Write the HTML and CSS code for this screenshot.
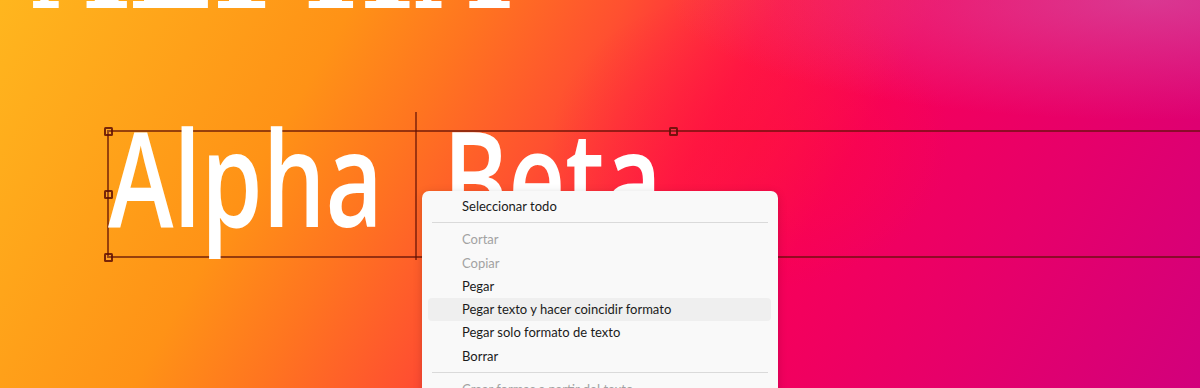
FILE: index.html
```html
<!DOCTYPE html>
<html lang="es">
<head>
<meta charset="utf-8">
<title>Alpha Beta</title>
<link rel="stylesheet" href="styles.css">
</head>
<body>
<div class="stage">
  <div class="title">ALPHA</div>

  <div class="frame">
    <span class="handle h-tl"></span>
    <span class="handle h-ml"></span>
    <span class="handle h-bl"></span>
    <span class="handle h-tm"></span>
  </div>
  <div class="divider"></div>

  <div class="word word-alpha">Alpha</div>
  <div class="word word-beta">Beta</div>

  <div class="menu">
    <div class="item">Seleccionar todo</div>
    <div class="sep"></div>
    <div class="item disabled">Cortar</div>
    <div class="item disabled">Copiar</div>
    <div class="item">Pegar</div>
    <div class="item hover">Pegar texto y hacer coincidir formato</div>
    <div class="item">Pegar solo formato de texto</div>
    <div class="item">Borrar</div>
    <div class="sep"></div>
    <div class="item disabled">Crear formas a partir del texto</div>
  </div>
</div>
</body>
</html>
```

FILE: styles.css
```css
html, body {
  margin: 0;
  padding: 0;
}

.stage {
  position: relative;
  width: 1200px;
  height: 388px;
  overflow: hidden;
  background:
    radial-gradient(ellipse 480px 120px at 1150px 0px, rgba(205, 110, 185, 0.5), rgba(205, 110, 185, 0) 100%),
    radial-gradient(ellipse 200px 150px at 750px 140px, rgba(255, 16, 56, 0.5), rgba(255, 16, 56, 0) 100%),
    linear-gradient(120deg,
      #FFB61E 0%,
      #FFA51A 12%,
      #FF9216 25%,
      #FF7420 34%,
      #FF5030 44%,
      #FF1846 55%,
      #F6005A 66%,
      #E6006A 82%,
      #D2007C 100%);
}

.title {
  position: absolute;
  left: 34px;
  top: -92px;
  font-family: "DejaVu Serif", "Liberation Serif", serif;
  font-weight: bold;
  font-size: 118px;
  line-height: 1;
  letter-spacing: 2px;
  color: #ffffff;
  white-space: nowrap;
}

.frame {
  position: absolute;
  left: 107px;
  top: 130px;
  width: 1200px;
  height: 124px;
  border-top: 2px solid rgba(95, 15, 5, 0.65);
  border-bottom: 2px solid rgba(95, 15, 5, 0.65);
  border-left: 2px solid rgba(95, 15, 5, 0.65);
}

.handle {
  position: absolute;
  width: 5px;
  height: 5px;
  border: 2px solid rgba(95, 15, 5, 0.85);
  border-radius: 1.5px;
  background: rgba(255, 255, 255, 0.05);
}

.h-tl { left: -5.5px; top: -5.5px; }
.h-ml { left: -5.5px; top: 57.5px; }
.h-bl { left: -5.5px; top: 120.5px; }
.h-tm { left: 560px; top: -5.5px; }

.divider {
  position: absolute;
  left: 415px;
  top: 112px;
  width: 2px;
  height: 148px;
  background: rgba(95, 15, 5, 0.6);
}

.word {
  position: absolute;
  top: 110px;
  font-family: "Open Sans", "Noto Sans", sans-serif;
  font-size: 132px;
  font-weight: 600;
  line-height: 1;
  color: #ffffff;
  white-space: nowrap;
  transform: scaleX(0.75);
  transform-origin: left top;
}

.word-alpha { left: 108px; }
.word-beta { left: 443px; }

.menu {
  position: absolute;
  left: 422px;
  top: 191px;
  width: 356px;
  padding: 4px 0;
  background: #f9f9f9;
  border-radius: 7px;
  box-shadow: 0 2px 10px rgba(0, 0, 0, 0.16);
  font-family: "Lato", "Noto Sans", sans-serif;
  font-size: 13px;
  color: #1b1b1b;
}

.item {
  height: 23.25px;
  line-height: 23.25px;
  margin: 0 7px 0 6px;
  padding-left: 34px;
  border-radius: 4px;
  white-space: nowrap;
}

.item.disabled {
  color: #a2a2a2;
}

.item.hover {
  background: #efefef;
}

.sep {
  height: 1px;
  margin: 4px 10px 5px 10px;
  background: #dadada;
}
```
